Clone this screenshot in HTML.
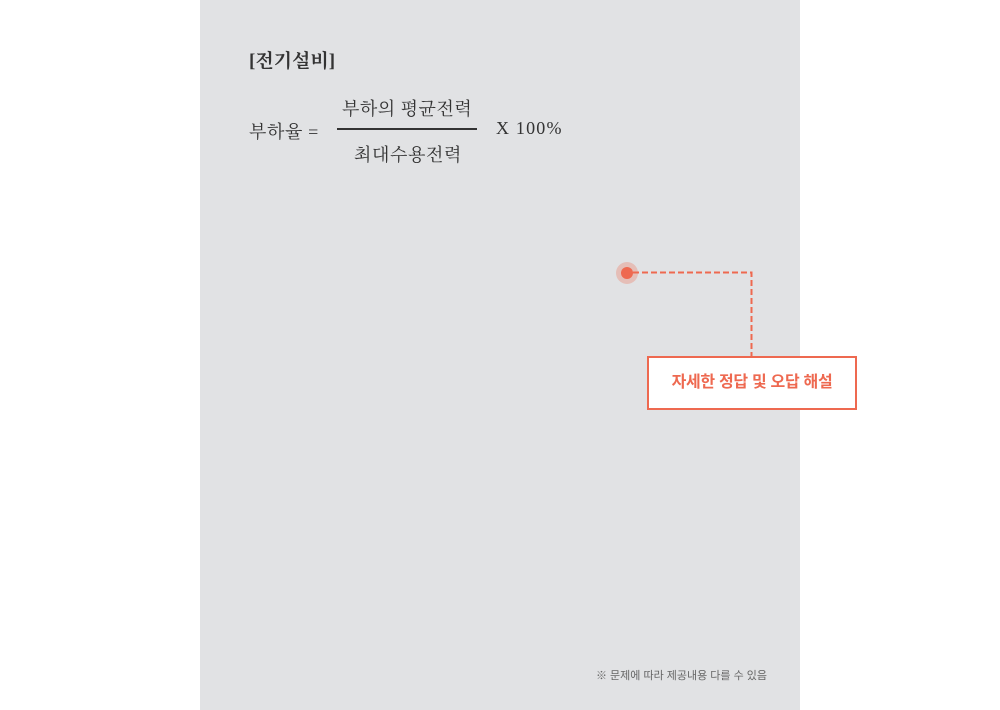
<!DOCTYPE html>
<html><head><meta charset="utf-8"><style>
body{margin:0;width:1000px;height:710px;background:#fff;position:relative;overflow:hidden;font-family:"Liberation Sans","Noto Sans CJK KR",sans-serif}
.panel{position:absolute;left:200px;top:0;width:600px;height:710px;background:#e1e2e4}
.serif{font-family:"Liberation Serif","Noto Serif CJK SC",serif;color:#333;position:absolute;white-space:nowrap}
.dot{position:absolute;left:616px;top:262px;width:22px;height:22px;border-radius:50%;background:rgba(238,105,80,.3)}
.dot i{position:absolute;left:5px;top:5px;width:12px;height:12px;border-radius:50%;background:#ee6950}
.box{position:absolute;left:647px;top:356px;width:206px;height:50px;border:2px solid #ee6950;background:#fff;color:#ee6950;font-weight:bold;font-size:16px;text-align:center;line-height:50px;letter-spacing:-0.3px}
</style></head><body>
<div class="panel"></div>
<div class="serif" style="left:249px;top:46px;font-size:19px;font-weight:bold">[전기설비]</div>
<div class="serif" style="left:249px;top:118px;font-size:18px;letter-spacing:0.6px">부하율 =</div>
<div class="serif" style="left:342px;top:95px;font-size:18px;letter-spacing:0.5px">부하의 평균전력</div>
<div style="position:absolute;left:337px;top:128px;width:140px;height:1.5px;background:#333"></div>
<div class="serif" style="left:354px;top:141px;font-size:18px;letter-spacing:0.6px">최대수용전력</div>
<div class="serif" style="left:496px;top:118px;font-size:18px;letter-spacing:1.2px">X 100%</div>
<div class="dot"><i></i></div>
<svg style="position:absolute;left:0;top:0" width="1000" height="710"><path d="M633 272.5H751.5V356" fill="none" stroke="#ee6950" stroke-width="2" stroke-dasharray="6 3"/></svg>
<div class="box">자세한 정답 및 오답 해설</div>
<div style="position:absolute;left:596px;top:667px;font-size:11px;color:#666">※ 문제에 따라 제공내용 다를 수 있음</div>
</body></html>
